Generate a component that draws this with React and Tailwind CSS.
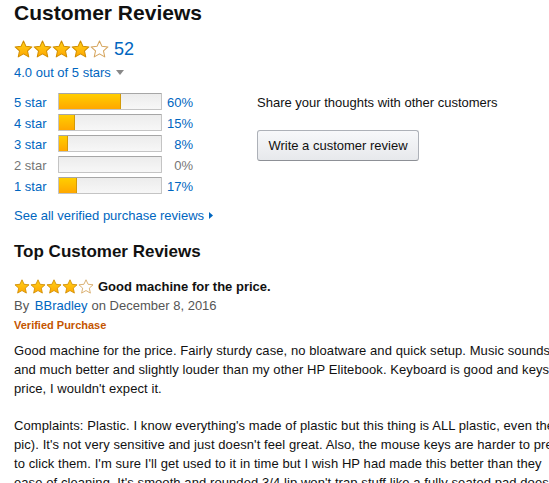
import React, { useId } from 'react'

const Star = ({ filled, size = 19, h = 18 }) => {
  const id = useId()
  return (
    <svg width={size} height={h} viewBox="0 0 24 23" className="block shrink-0">
      <defs>
        <linearGradient id={id} x1="0" y1="0" x2="0" y2="1">
          <stop offset="0" stopColor="#ffd21a" />
          <stop offset="1" stopColor="#ffa700" />
        </linearGradient>
      </defs>
      <polygon
        points="12,1.2 15.2,8.1 22.8,8.9 17.1,14 18.7,21.6 12,17.7 5.3,21.6 6.9,14 1.2,8.9 8.8,8.1"
        fill={filled ? `url(#${id})` : '#ffffff'}
        stroke={filled ? '#d08d00' : '#d5a45c'}
        strokeWidth="1.3"
        strokeLinejoin="round"
      />
    </svg>
  )
}

const Stars = ({ count, size, h }) => (
  <div className="flex">
    {[0, 1, 2, 3, 4].map((i) => (
      <Star key={i} filled={i < count} size={size} h={h} />
    ))}
  </div>
)

const rows = [
  { label: '5 star', pct: 60 },
  { label: '4 star', pct: 15 },
  { label: '3 star', pct: 8 },
  { label: '2 star', pct: 0 },
  { label: '1 star', pct: 17 },
]

// review text runs past the right edge, as in the screenshot
const bodyLines = [
  'Good machine for the price. Fairly sturdy case, no bloatware and quick setup. Music sounds great',
  'and much better and slightly louder than my other HP Elitebook. Keyboard is good and keys are',
  "price, I wouldn't expect it.",
  '',
  "Complaints: Plastic. I know everything's made of plastic but this thing is ALL plastic, even the",
  "pic). It's not very sensitive and just doesn't feel great. Also, the mouse keys are harder to press",
  "to click them. I'm sure I'll get used to it in time but I wish HP had made this better than they",
  "ease of cleaning. It's smooth and rounded 3/4 lip won't trap stuff like a fully seated pad does.",
]

export default function App() {
  return (
    <div
      className="w-[549px] h-[483px] overflow-hidden bg-white text-[#111] px-[14px]"
      style={{ fontFamily: '"Liberation Sans", Arial, sans-serif' }}
    >
      {/* Header */}
      <h2 className="pt-px text-[21px] leading-[24px] font-bold">Customer Reviews</h2>

      <div className="mt-[15px] flex items-start h-[18px]">
        <Stars count={4} size={19} h={18} />
        <span className="ml-[5px] text-[18px] leading-[18px] text-[#0066c0]">52</span>
      </div>

      <div className="mt-[5px] flex items-center text-[13px] leading-[19px] text-[#0066c0]">
        4.0 out of 5 stars
        <svg width="8" height="5" viewBox="0 0 8 5" className="ml-[5px]">
          <polygon points="0,0 8,0 4,5" fill="#888" />
        </svg>
      </div>

      {/* Histogram + write review */}
      <div className="mt-[9px] flex">
        <div className="w-[243px] shrink-0">
          {rows.map((r) => {
            const dim = r.pct === 0
            return (
              <div
                key={r.label}
                className={`flex items-center h-[21px] text-[13px] leading-[19px] ${dim ? 'text-[#767676]' : 'text-[#0066c0]'}`}
              >
                <span className="w-[44px] shrink-0 pt-px">{r.label}</span>
                <div className="w-[104px] h-[17px] shrink-0 rounded-[1px] border border-[#c4c4c4] border-t-[#a6a6a6] bg-gradient-to-b from-[#ececec] to-[#f7f7f7] overflow-hidden">
                  {r.pct > 0 && (
                    <div
                      className="h-full bg-gradient-to-b from-[#ffce00] to-[#ffa700] border border-[#d39a08] border-t-[#c58e06] -mt-px -ml-px box-content"
                      style={{ width: `${r.pct}%` }}
                    />
                  )}
                </div>
                <span className="w-[31px] shrink-0 text-right pt-px">{r.pct}%</span>
              </div>
            )
          })}

          <div className="mt-[10px] flex items-center text-[13px] leading-[19px] text-[#0066c0]">
            See all verified purchase reviews
            <svg width="4" height="7" viewBox="0 0 4 7" className="ml-[5px]">
              <polygon points="0,0 4,3.5 0,7" fill="#0066c0" />
            </svg>
          </div>
        </div>

        <div className="pt-[2px]">
          <p className="text-[13px] leading-[19px]">Share your thoughts with other customers</p>
          <button className="mt-[18px] w-[162px] h-[31px] rounded-[3px] border border-[#adb1b8] border-b-[#8d9096] bg-gradient-to-b from-[#f7f8fa] to-[#e7e9ec] text-[13px] leading-[29px] text-[#111] text-center">
            Write a customer review
          </button>
        </div>
      </div>

      {/* Top reviews */}
      <h3 className="mt-[16px] text-[17px] leading-[22px] font-bold">Top Customer Reviews</h3>

      <div className="mt-[14px] flex items-center h-[19px]">
        <Stars count={4} size={16} h={15} />
        <span className="ml-[4px] text-[13px] leading-[19px] font-bold">Good machine for the price.</span>
      </div>

      <div className="text-[13px] leading-[19px] text-[#555]">
        By <span className="ml-[2px] text-[#0066c0]">BBradley</span>
        <span className="ml-[4px]">on December 8, 2016</span>
      </div>

      <div className="mt-[2px] text-[11px] leading-[16px] font-bold text-[#c45500]">Verified Purchase</div>

      <div className="mt-[9px] text-[13px] leading-[18.8px] tracking-[0.08px] text-[#111]">
        {bodyLines.map((line, i) => (
          <div key={i} className="whitespace-nowrap h-[18.8px]">
            {line}
          </div>
        ))}
      </div>
    </div>
  )
}
